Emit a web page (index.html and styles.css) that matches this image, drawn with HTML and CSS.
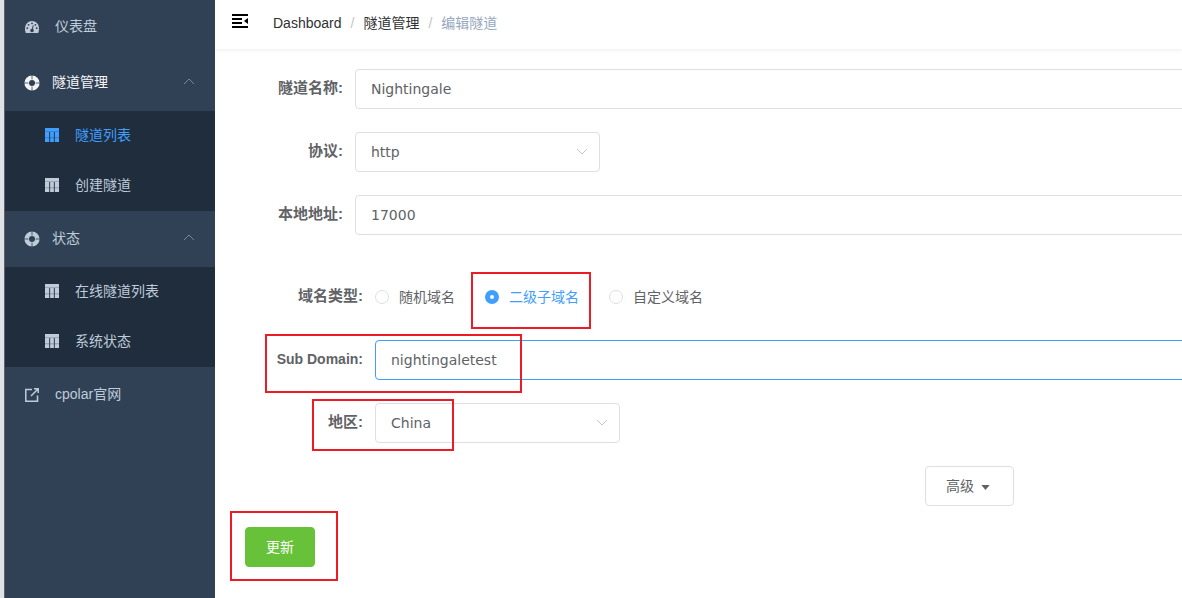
FILE: index.html
```
<!DOCTYPE html>
<html lang="zh-CN">
<head>
    <meta charset="UTF-8">
    <title>编辑隧道</title>
    <link rel="stylesheet" href="styles.css">
</head>
<body>
<svg class="sprite" aria-hidden="true">
    <symbol id="icon-table" viewBox="0 0 14 14">
        <path d="M0 0h14v14H0z" opacity=".55"/>
        <path d="M0 0h14v3.500H0zM0 4h4.300v5.500H0zM5 4h4v5.500H5zM9.700 4H14v5.500H9.700zM0 10.300h4.300V14H0zM5 10.300h4V14H5zM9.700 10.300H14V14H9.700z"/>
        <path d="M4.700 4v10M9.300 4v10" stroke="#1f2d3d" stroke-width=".8"/>
    </symbol>
    <symbol id="icon-help" viewBox="0 0 16 16">
        <circle cx="8" cy="8" r="5.300" fill="none" stroke="currentColor" stroke-width="4.600"/>
        <path d="M8 0v4.500M8 11.500V16M0 8h4.500M11.500 8H16" stroke="#304156" stroke-width=".8"/>
    </symbol>
    <symbol id="icon-arrow" viewBox="0 0 12 12">
        <path d="M1 3l5 5 5-5" fill="none" stroke="currentColor"/>
    </symbol>
</svg>
<div class="app">
    <nav class="sidebar">
        <a class="menu-item" href="#">
            <svg class="icon" viewBox="0 0 14 14">
                <path d="M7 1a7 7 0 0 0-7 7c0 2 .2 3.600.800 5h12.400c.6-1.400.800-3 .8-5a7 7 0 0 0-7-7z"/>
                <g fill="#304156"><circle cx="2.300" cy="8.200" r=".9"/><circle cx="3.600" cy="4.800" r=".9"/><circle cx="7" cy="3.300" r=".9"/><circle cx="10.400" cy="4.800" r=".9"/><circle cx="11.700" cy="8.200" r=".9"/><path d="M7.800 5.200l.9.200-.8 3.500a1.800 1.800 0 1 1-1-.2z"/></g>
            </svg>
            <span>仪表盘</span>
        </a>
        <a class="menu-item menu-title open" href="#">
            <svg class="icon"><use href="#icon-help"/></svg>
            <span>隧道管理</span>
            <svg class="arrow"><use href="#icon-arrow"/></svg>
        </a>
        <div class="submenu">
            <a class="menu-item active" href="#"><svg class="icon"><use href="#icon-table"/></svg><span>隧道列表</span></a>
            <a class="menu-item" href="#"><svg class="icon"><use href="#icon-table"/></svg><span>创建隧道</span></a>
        </div>
        <a class="menu-item menu-title" href="#">
            <svg class="icon"><use href="#icon-help"/></svg>
            <span>状态</span>
            <svg class="arrow"><use href="#icon-arrow"/></svg>
        </a>
        <div class="submenu">
            <a class="menu-item" href="#"><svg class="icon"><use href="#icon-table"/></svg><span>在线隧道列表</span></a>
            <a class="menu-item" href="#"><svg class="icon"><use href="#icon-table"/></svg><span>系统状态</span></a>
        </div>
        <a class="menu-item" href="#">
            <svg class="icon line" viewBox="0 0 14 14"><path d="M7 1.500H.8v11.700h11.700V7.500M6 8l7-7M9 .8h4.200V5"/></svg>
            <span>cpolar官网</span>
        </a>
    </nav>

    <main class="main">
        <header class="navbar">
            <button class="hamburger" type="button" aria-label="折叠菜单">
                <svg viewBox="0 0 16 14"><path d="M0 0h16v2H0zM0 4h10v2H0zM0 8h10v2H0zM0 12h16v2H0zM16 4v6l-4-3z"/></svg>
            </button>
            <div class="breadcrumb">
                <a href="#">Dashboard</a><i>/</i><a href="#">隧道管理</a><i>/</i><span>编辑隧道</span>
            </div>
        </header>

        <form class="form">
            <div class="form-item">
                <label class="label" for="name">隧道名称:</label>
                <input class="input" id="name" type="text" value="Nightingale">
            </div>
            <div class="form-item">
                <label class="label" for="proto">协议:</label>
                <div class="select">
                    <select class="input" id="proto"><option>http</option></select>
                    <svg class="arrow"><use href="#icon-arrow"/></svg>
                </div>
            </div>
            <div class="form-item">
                <label class="label" for="addr">本地地址:</label>
                <input class="input" id="addr" type="text" value="17000">
            </div>

            <div class="domain">
                <div class="form-item" role="radiogroup" aria-labelledby="domain-type">
                    <span class="label" id="domain-type">域名类型:</span>
                    <div class="radios">
                        <label class="radio"><input type="radio" name="type"><span>随机域名</span></label>
                        <label class="radio"><input type="radio" name="type" checked><span>二级子域名</span><span class="mark mark-type"></span></label>
                        <label class="radio"><input type="radio" name="type"><span>自定义域名</span></label>
                    </div>
                </div>
                <div class="form-item">
                    <label class="label latin" for="sub">Sub Domain:</label>
                    <input class="input focus" id="sub" type="text" value="nightingaletest">
                    <span class="mark mark-sub"></span>
                </div>
                <div class="form-item">
                    <label class="label" for="region">地区:</label>
                    <div class="select">
                        <select class="input" id="region"><option>China</option></select>
                        <svg class="arrow"><use href="#icon-arrow"/></svg>
                    </div>
                    <span class="mark mark-region"></span>
                </div>
            </div>

            <div class="more">
                <button class="btn" type="button">高级<svg class="caret" viewBox="0 0 10 6"><path d="M0 0h10L5 6z"/></svg></button>
            </div>
            <div class="submit">
                <button class="btn btn-success" type="button">更新</button>
                <span class="mark mark-submit"></span>
            </div>
        </form>
    </main>
</div>
</body>
</html>
```
FILE: styles.css
```
* {
    box-sizing: border-box;
}

body {
    margin: 0;
    background: #fff;
    color: #606266;
    font-family: "Liberation Sans", "Noto Sans CJK SC", sans-serif;
    font-size: 14px;
}

a {
    color: inherit;
    text-decoration: none;
}

.sprite {
    position: absolute;
    width: 0;
    height: 0;
}

.app {
    display: flex;
    height: 100vh;
    overflow: hidden;
    border-left: 4px solid #dfe3e8;
}

/* sidebar */
.sidebar {
    flex: none;
    width: 211px;
    border-left: 1px solid #5f6369;
    background: #304156;
    color: #bfcbd9;
    overflow: hidden;
}

.menu-item {
    display: flex;
    align-items: center;
    gap: 16px;
    height: 56px;
    padding: 0 20px;
}

.menu-item:first-child {
    margin-top: -1px;
}

.menu-item span {
    padding-bottom: 4px;
}

.icon {
    flex: none;
    width: 14px;
    height: 14px;
    fill: currentColor;
}

.icon.line {
    fill: none;
    stroke: currentColor;
    stroke-width: 1.5px;
}

.menu-title {
    gap: 12px;
    padding-left: 19px;
}

.menu-title .icon {
    width: 16px;
    height: 16px;
}

.arrow {
    width: 12px;
    height: 12px;
}

.menu-title .arrow {
    margin: 0 0 4px auto;
    color: #7d8794;
    transform: rotate(180deg);
}

.open {
    color: #f4f4f5;
}

.submenu {
    background: #1f2d3d;
}

.submenu .menu-item {
    height: 50px;
    margin: 0;
    padding: 0 20px 2px 40px;
}

.submenu .menu-item span {
    padding-bottom: 2px;
}

.active {
    color: #409eff;
}

/* header */
.main {
    flex: 1;
    min-width: 0;
    overflow: hidden;
}

.navbar {
    display: flex;
    align-items: center;
    height: 49px;
    padding: 0 17px;
    box-shadow: 0 1px 4px rgba(0, 21, 41, .08);
}

.hamburger {
    margin-right: 25px;
    padding: 0 0 7px;
    border: 0;
    background: none;
}

.hamburger svg {
    display: block;
    width: 16px;
    height: 14px;
}

.breadcrumb {
    padding-bottom: 5px;
    color: #303133;
}

.breadcrumb i {
    margin: 0 9px;
    color: #c0c4cc;
    font-style: normal;
}

.breadcrumb span {
    color: #97a8be;
}

/* form */
.form {
    padding: 20px 0 0 30px;
}

.form-item {
    display: flex;
    position: relative;
    margin: 0 -20px 23px 0;
}

.label {
    flex: none;
    width: 110px;
    padding-right: 12px;
    font-size: 15px;
    font-weight: bold;
    line-height: 38px;
    text-align: right;
}

.latin {
    font-size: 14px;
}

.input {
    flex: 1;
    min-width: 0;
    width: 100%;
    height: 40px;
    padding: 0 15px;
    border: 1px solid #dcdfe6;
    border-radius: 4px;
    outline: 0;
    background: #fff;
    color: #606266;
    font-family: "DejaVu Sans", sans-serif;
    font-size: 14px;
    appearance: none;
}

.focus {
    border-color: #409eff;
}

.select {
    position: relative;
    width: 245px;
}

.select .arrow {
    position: absolute;
    top: 14px;
    right: 12px;
    color: #c0c4cc;
    pointer-events: none;
}

.domain {
    padding: 19px 0 0 20px;
}

.radios {
    display: flex;
    gap: 30px;
}

.radio {
    display: flex;
    align-items: center;
    gap: 10px;
    position: relative;
    height: 40px;
}

.radio span {
    padding-bottom: 2px;
}

.radio input {
    width: 14px;
    height: 14px;
    margin: 0;
    border: 1px solid #dcdfe6;
    border-radius: 50%;
    background: #fff;
    appearance: none;
}

.radio input:checked {
    border: 5px solid #409eff;
}

.radio:has(input:checked) {
    color: #409eff;
}

.btn {
    height: 40px;
    padding: 0 20px 2px;
    border: 1px solid #dcdfe6;
    border-radius: 4px;
    background: #fff;
    color: #606266;
    font-family: inherit;
    font-size: 14px;
}

.more {
    padding-right: 168px;
    text-align: right;
}

.caret {
    width: 9px;
    height: 5px;
    margin: 0 3px 1px 7px;
    fill: currentColor;
}

.submit {
    position: relative;
    margin-top: 21px;
}

.btn-success {
    border-color: #67c23a;
    background: #67c23a;
    color: #fff;
}

/* red highlight frames */
.mark {
    position: absolute;
    border: 2px solid #ed1c24;
    pointer-events: none;
}

.mark-type {
    top: -5px;
    left: -14px;
    width: 120px;
    height: 57px;
}

.mark-sub {
    top: -6px;
    left: 0;
    width: 257px;
    height: 59px;
}

.mark-region {
    top: -4px;
    left: 47px;
    width: 142px;
    height: 52px;
}

.mark-submit {
    top: -16px;
    left: -15px;
    width: 108px;
    height: 70px;
}
```
